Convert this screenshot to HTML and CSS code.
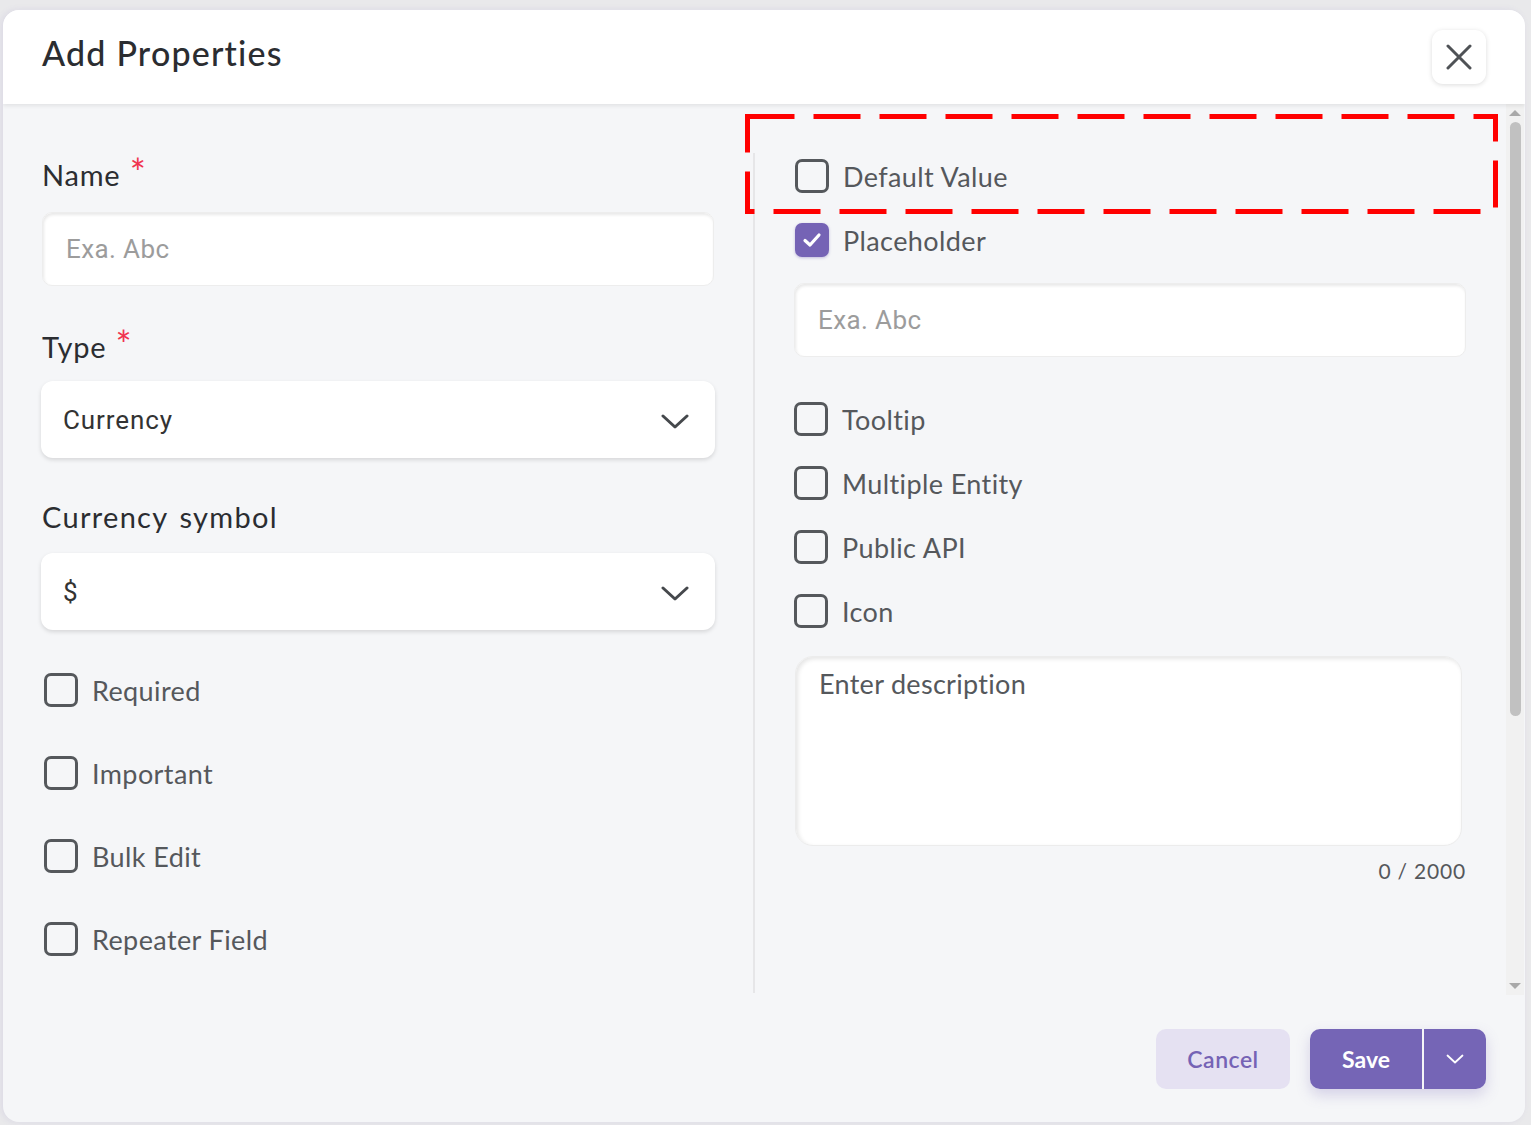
FILE: index.html
```html
<!DOCTYPE html>
<html lang="en">
<head>
    <meta charset="UTF-8">
    <meta name="viewport" content="width=device-width, initial-scale=1.0">
    <title>Add Properties</title>
    <link rel="stylesheet" href="styles.css">
</head>
<body>
    <div class="modal">
        <div class="modal-header">
            <h2 class="modal-title">Add Properties</h2>
            <button class="close-btn" aria-label="Close">
                <svg width="26" height="26" viewBox="0 0 26 26"><path d="M2 2 L24 24 M24 2 L2 24" stroke="#4f5256" stroke-width="3" stroke-linecap="round"/></svg>
            </button>
        </div>

        <div class="modal-body">
            <div class="columns">
                <!-- Left column -->
                <div class="col col-left">
                    <label class="field-label">Name <span class="req">*</span></label>
                    <input class="text-input" type="text" placeholder="Exa. Abc">

                    <label class="field-label label-type">Type <span class="req">*</span></label>
                    <div class="select">
                        <span>Currency</span>
                        <svg width="28" height="16" viewBox="0 0 28 16"><path d="M2 2 L14 13 L26 2" fill="none" stroke="#45484c" stroke-width="3" stroke-linecap="round" stroke-linejoin="round"/></svg>
                    </div>

                    <label class="field-label label-currency">Currency symbol</label>
                    <div class="select">
                        <span>$</span>
                        <svg width="28" height="16" viewBox="0 0 28 16"><path d="M2 2 L14 13 L26 2" fill="none" stroke="#45484c" stroke-width="3" stroke-linecap="round" stroke-linejoin="round"/></svg>
                    </div>

                    <div class="check-list check-list-left">
                        <div class="check-row"><span class="checkbox"></span>Required</div>
                        <div class="check-row"><span class="checkbox"></span>Important</div>
                        <div class="check-row"><span class="checkbox"></span>Bulk Edit</div>
                        <div class="check-row"><span class="checkbox"></span>Repeater Field</div>
                    </div>
                </div>

                <div class="divider"></div>

                <!-- Right column -->
                <div class="col col-right">
                    <div class="check-row"><span class="checkbox"></span>Default Value</div>
                    <div class="check-row row-placeholder">
                        <span class="checkbox checked">
                            <svg width="22" height="22" viewBox="0 0 22 22"><path d="M4 11.5 L9 16 L18 6" fill="none" stroke="#fff" stroke-width="3.2" stroke-linecap="round" stroke-linejoin="round"/></svg>
                        </span>Placeholder
                    </div>
                    <input class="text-input input-placeholder" type="text" placeholder="Exa. Abc">

                    <div class="check-list check-list-right">
                        <div class="check-row"><span class="checkbox"></span>Tooltip</div>
                        <div class="check-row"><span class="checkbox"></span>Multiple Entity</div>
                        <div class="check-row"><span class="checkbox"></span>Public API</div>
                        <div class="check-row"><span class="checkbox"></span>Icon</div>
                    </div>

                    <textarea class="description" placeholder="Enter description"></textarea>
                    <div class="counter">0 / 2000</div>
                </div>
            </div>

            <div class="scrollbar">
                <span class="arrow arrow-up"></span>
                <div class="thumb"></div>
                <span class="arrow arrow-down"></span>
            </div>
        </div>

        <div class="modal-footer">
            <button class="btn btn-cancel">Cancel</button>
            <div class="save-group">
                <button class="btn btn-save">Save</button>
                <button class="btn btn-save-menu" aria-label="More">
                    <svg width="18" height="10" viewBox="0 0 18 10"><path d="M1.5 1.5 L9 8.5 L16.5 1.5" fill="none" stroke="#fff" stroke-width="1.8" stroke-linecap="round" stroke-linejoin="round"/></svg>
                </button>
            </div>
        </div>

        <!-- Highlight annotation -->
        <svg class="highlight" width="753" height="100" viewBox="0 0 753 100">
            <rect x="2.5" y="2.5" width="748" height="95" fill="none" stroke="#ff0000" stroke-width="5" stroke-dasharray="47 19"/>
        </svg>
    </div>
</body>
</html>
```

FILE: styles.css
```css
/* Core Styling */
*, *:before, *:after {
    margin: 0;
    padding: 0;
    box-sizing: border-box;
}

body {
    font-family: Lato, "Open Sans", sans-serif;
    background-color: #e9e9eb;
    color: #2b2d31;
    width: 1531px;
    height: 1125px;
    overflow: hidden;
}

.modal {
    position: relative;
    margin: 10px 6px 0 3px;
    width: 1522px;
    height: 1112px;
    background-color: #f5f6f8;
    border-radius: 16px;
    overflow: hidden;
    display: flex;
    flex-direction: column;
    box-shadow: -2px 0 6px rgba(120, 110, 190, 0.12);
}

/* Header */
.modal-header {
    height: 94px;
    flex-shrink: 0;
    background-color: #fff;
    display: flex;
    align-items: center;
    justify-content: space-between;
    padding: 0 39px;
    box-shadow: 0 2px 4px rgba(0, 0, 0, 0.08);
    position: relative;
    z-index: 1;
}

.modal-title {
    font-size: 34px;
    font-weight: 500;
    color: #2b2d31;
    margin-top: -9px;
    letter-spacing: 1.2px;
}

.close-btn {
    width: 54px;
    height: 54px;
    border: none;
    border-radius: 11px;
    background-color: #fff;
    box-shadow: 0 1px 5px rgba(0, 0, 0, 0.14);
    display: flex;
    align-items: center;
    justify-content: center;
    cursor: pointer;
}

/* Body */
.modal-body {
    height: 891px;
    flex-shrink: 0;
    display: flex;
}

.columns {
    flex: 1;
    display: grid;
    grid-template-columns: 672px 2px 672px;
    column-gap: 39px;
    padding-left: 39px;
}

.col {
    display: flex;
    flex-direction: column;
}

.divider {
    background-color: #e6e6e8;
    margin-top: 49px;
    margin-bottom: 2px;
}

.field-label {
    font-size: 29px;
    line-height: 34px;
    color: #2b2d31;
    letter-spacing: 0.8px;
    margin-top: 54px;
    margin-bottom: 20px;
}

.label-type {
    margin-top: 44px;
    margin-bottom: 17px;
}

.label-currency {
    margin-top: 42px;
    margin-bottom: 19px;
    letter-spacing: 1.3px;
    word-spacing: 3px;
}

.req {
    color: #f0334f;
    font-size: 38px;
    line-height: 20px;
    position: relative;
    top: 1px;
    margin-left: 1px;
}

.text-input {
    height: 74px;
    width: 100%;
    border: 1px solid #ededed;
    border-radius: 10px;
    background-color: #fff;
    box-shadow: inset 1px 2px 3px rgba(0, 0, 0, 0.09);
    padding: 0 23px;
    font-family: Roboto, sans-serif;
    font-size: 26px;
    letter-spacing: 0.4px;
    color: #333;
    outline: none;
}

.text-input::placeholder {
    color: #9c9c9c;
}

.select {
    height: 77px;
    margin: 0 -1px;
    background-color: #fff;
    border-radius: 12px;
    box-shadow: 0 2px 4px rgba(0, 0, 0, 0.13);
    display: flex;
    align-items: center;
    justify-content: space-between;
    padding: 0 26px 0 22px;
    font-family: Roboto, sans-serif;
    font-size: 26px;
    letter-spacing: 0.9px;
    color: #333;
}

.select svg {
    margin-top: 4px;
}

/* Checkboxes */
.check-list {
    display: flex;
    flex-direction: column;
}

.check-list-left {
    margin-top: 43px;
    gap: 49px;
    padding-left: 2px;
}

.check-list-right {
    margin-top: 45px;
    gap: 30px;
}

.check-row {
    display: flex;
    align-items: center;
    height: 34px;
    font-size: 27px;
    letter-spacing: 0.4px;
    color: #55585c;
}

.col-right {
    padding-top: 55px;
}

.col-right > .check-row {
    padding-left: 1px;
}

.row-placeholder {
    margin-top: 30px;
}

.checkbox {
    width: 34px;
    height: 34px;
    border: 3px solid #55585c;
    border-radius: 7px;
    margin-right: 14px;
    flex-shrink: 0;
    display: flex;
    align-items: center;
    justify-content: center;
}

.checkbox.checked {
    background-color: #7563b5;
    border-color: #7563b5;
    box-shadow: 0 1px 3px rgba(117, 99, 181, 0.4);
}

.input-placeholder {
    margin-top: 26px;
}

.description {
    margin-top: 28px;
    margin-left: 1px;
    width: 667px;
    height: 190px;
    border: 1px solid #ececec;
    border-radius: 18px;
    background-color: #fff;
    box-shadow: inset 2px 2px 4px rgba(0, 0, 0, 0.1);
    padding: 10px 23px;
    font-family: Lato, sans-serif;
    font-size: 27px;
    letter-spacing: 0.3px;
    resize: none;
    outline: none;
}

.description::placeholder {
    color: #55585c;
}

.counter {
    margin-top: 12px;
    text-align: right;
    font-size: 21px;
    line-height: 26px;
    letter-spacing: 0.8px;
    color: #55585c;
}

/* Fake scrollbar */
.scrollbar {
    width: 18px;
    margin-right: 1px;
    background-color: #f1f1f1;
    display: flex;
    flex-direction: column;
    align-items: center;
    padding: 6px 0 6px;
}

.thumb {
    width: 11px;
    flex: 1;
    margin: 6px 0 267px;
    background-color: #c1c1c1;
    border-radius: 6px;
}

.arrow {
    width: 0;
    height: 0;
    border-left: 6px solid transparent;
    border-right: 6px solid transparent;
}

.arrow-up {
    border-bottom: 6px solid #a9a9a9;
}

.arrow-down {
    border-top: 6px solid #a9a9a9;
}

/* Footer */
.modal-footer {
    flex: 1;
    display: flex;
    justify-content: flex-end;
    align-items: flex-start;
    gap: 20px;
    padding: 34px 39px 0 0;
}

.btn {
    height: 60px;
    border: none;
    border-radius: 10px;
    font-family: Lato, sans-serif;
    font-size: 23px;
    cursor: pointer;
}

.btn-cancel {
    width: 134px;
    background-color: #e5e1f2;
    color: #7563b5;
    font-weight: 600;
    letter-spacing: 0.5px;
}

.save-group {
    display: flex;
    gap: 2px;
    box-shadow: 0 6px 14px rgba(117, 99, 181, 0.25);
    border-radius: 10px;
}

.btn-save {
    width: 112px;
    background-color: #7565b6;
    color: #fff;
    font-weight: 700;
    border-radius: 10px 0 0 10px;
}

.btn-save-menu {
    width: 62px;
    background-color: #7565b6;
    border-radius: 0 10px 10px 0;
    display: flex;
    align-items: center;
    justify-content: center;
}

/* Annotation overlay */
.highlight {
    position: absolute;
    left: 742px;
    top: 104px;
    pointer-events: none;
    z-index: 2;
}
```
